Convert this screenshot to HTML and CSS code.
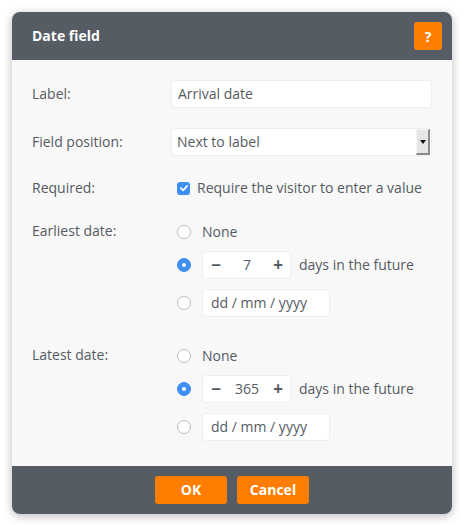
FILE: index.html
```html
<!DOCTYPE html>
<html>
<head>
<meta charset="utf-8">
<link rel="stylesheet" href="styles.css">
</head>
<body>
<div class="dialog">
  <div class="header">
    <div class="title">Date field</div>
    <div class="help">?</div>
  </div>
  <div class="body">
    <div class="row r1">
      <div class="lbl">Label:</div>
      <div class="ctl"><div class="input wide">Arrival date</div></div>
    </div>
    <div class="row r2">
      <div class="lbl">Field position:</div>
      <div class="ctl">
        <div class="input wide select">Next to label
          <span class="arrow"><svg width="6" height="4" viewBox="0 0 6 4"><path d="M0 0H6L3 4Z" fill="#111"/></svg></span>
        </div>
      </div>
    </div>
    <div class="row r3">
      <div class="lbl">Required:</div>
      <div class="ctl line">
        <span class="check"><svg width="12" height="12" viewBox="0 0 12 12"><path d="M3 6.2L5.1 8.3L9.2 3.9" fill="none" stroke="#fff" stroke-width="1.8" stroke-linecap="round" stroke-linejoin="round"/></svg></span>
        <span class="ctext">Require the visitor to enter a value</span>
      </div>
    </div>
    <div class="row r4">
      <div class="lbl top">Earliest date:</div>
      <div class="ctl opts">
        <div class="opt none"><span class="radio"></span><span class="otext">None</span></div>
        <div class="opt step"><span class="radio on"></span>
          <div class="stepper"><span class="minus">−</span><span class="val">7</span><span class="plus">+</span></div>
          <span class="dtext">days in the future</span></div>
        <div class="opt date"><span class="radio"></span><div class="input dateinp">dd / mm / yyyy</div></div>
      </div>
    </div>
    <div class="row r5">
      <div class="lbl top">Latest date:</div>
      <div class="ctl opts">
        <div class="opt none"><span class="radio"></span><span class="otext">None</span></div>
        <div class="opt step"><span class="radio on"></span>
          <div class="stepper"><span class="minus">−</span><span class="val">365</span><span class="plus">+</span></div>
          <span class="dtext">days in the future</span></div>
        <div class="opt date"><span class="radio"></span><div class="input dateinp">dd / mm / yyyy</div></div>
      </div>
    </div>
  </div>
  <div class="footer">
    <div class="btn">OK</div>
    <div class="btn">Cancel</div>
  </div>
</div>
</body>
</html>
```
FILE: styles.css
```css
html, body { margin: 0; padding: 0; background: #ffffff; }
body { padding: 12px; font-family: "Open Sans", "DejaVu Sans", sans-serif; font-size: 14px; color: #555b63; }
.dialog {
  width: 440px; border-radius: 8px; overflow: hidden;
  box-shadow: 0 2px 10px rgba(0,0,0,0.28);
  background: #f8f8f8;
}
.header {
  height: 48px; background: #565c64; display: flex; align-items: center;
  padding: 0 10px 0 20px; justify-content: space-between;
}
.title { color: #fff; font-weight: 700; font-size: 14px; padding-bottom: 2px; }
.help {
  width: 28px; height: 28px; background: #ff7d00; border-radius: 3px;
  color: #fff; font-weight: 700; font-size: 14px; display: flex; align-items: center; justify-content: center;
}
.body { padding: 21px 0 26px 20px; }
.row { display: flex; }
.lbl { width: 140px; display: flex; align-items: center; padding-bottom: 2px; box-sizing: border-box; }
.lbl.top { align-items: flex-start; height: 20px; line-height: 18px; padding-bottom: 0; }
.ctl { flex: 1; }
.r2 { margin-top: 22px; }
.r3 { margin-top: 23px; }
.r4 { margin-top: 23px; }
.r5 { margin-top: 30px; }
.input {
  height: 26px; background: #fff; border-radius: 3px; box-sizing: border-box;
  box-shadow: 0 0 0 1px #eeeeee; display: flex; align-items: center; padding-left: 6px; padding-bottom: 2px; color: #555b63;
}
.wide { width: 259px; }
.select { position: relative; padding-left: 5px; }
.arrow {
  position: absolute; right: 1px; top: 0; width: 14px; height: 26px; box-sizing: border-box;
  background: #e6e6e6; border-right: 2px solid #8a8a8a; border-bottom: 2px solid #8a8a8a;
  border-left: 1px solid #f4f4f4; border-top: 1px solid #f4f4f4;
  display: flex; align-items: center; justify-content: center;
}
.line { display: flex; align-items: center; height: 20px; }
.ctext { padding-bottom: 2px; }
.check {
  width: 13px; height: 13px; border-radius: 3px; background: #3d8ff2; margin-left: 5px; margin-right: 7px;
  display: flex; align-items: center; justify-content: center;
}
.opts { display: flex; flex-direction: column; }
.opt { display: flex; align-items: center; }
.none { height: 20px; }
.otext, .dtext { padding-bottom: 2px; }
.otext { margin-left: -1px; }
.step { margin-top: 10px; }
.date { margin-top: 12px; }
.radio {
  width: 14px; height: 14px; border-radius: 50%; box-sizing: border-box; border: 1px solid #bdbdbd;
  background: #fff; margin-left: 5px; margin-right: 12px; flex: none;
}
.radio.on { background: #3d8ff2; border-color: #3d8ff2; position: relative; }
.radio.on::after {
  content: ""; position: absolute; left: 4px; top: 4px; width: 4px; height: 4px; border-radius: 50%; background: #fff;
}
.stepper {
  width: 87px; height: 26px; background: #fff; border-radius: 3px; box-shadow: 0 0 0 1px #eeeeee;
  display: flex; align-items: center; justify-content: space-between; box-sizing: border-box; padding: 0 6px 2px 7px;
}
.minus, .plus { font-weight: 700; color: #555b63; font-size: 17px; width: 12px; text-align: center; }
.val { flex: 1; text-align: center; }
.dtext { margin-left: 9px; }
.dateinp { width: 126px; padding-left: 8px; }
.footer {
  height: 48px; background: #565c64; display: flex; align-items: center; justify-content: center; gap: 10px;
}
.btn {
  width: 72px; height: 28px; background: #ff7d00; border-radius: 3px; color: #fff; font-weight: 700;
  display: flex; align-items: center; justify-content: center; font-size: 14px; padding-bottom: 2px; box-sizing: border-box;
}
```
